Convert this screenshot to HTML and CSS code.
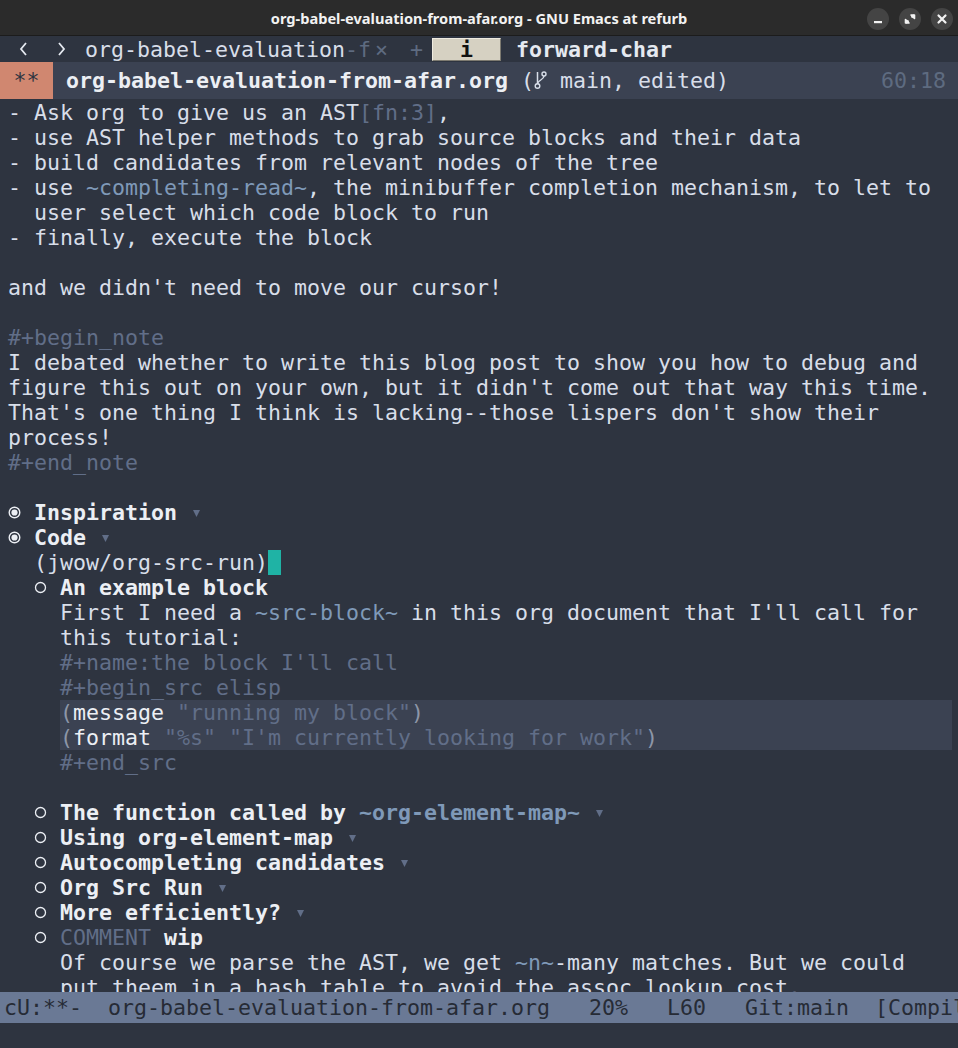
FILE: index.html
```html
<!DOCTYPE html>
<html>
<head>
<meta charset="utf-8">
<link rel="stylesheet" href="styles.css">
</head>
<body>
<div class="frame">
  <header class="titlebar">
    <div></div>
    <div class="title">org-babel-evaluation-from-afar.org - GNU Emacs at refurb</div>
    <div class="wbtns">
      <span class="wbtn"><svg width="22" height="22" viewBox="0 0 22 22"><rect x="7" y="13" width="8" height="2.2" fill="#f2f2f2"/></svg></span>
      <span class="wbtn"><svg width="22" height="22" viewBox="0 0 22 22"><path d="M12 7h3.5v3.5z M10 15H6.5v-3.5z" fill="#f2f2f2" stroke="#f2f2f2" stroke-width="1.6" stroke-linejoin="round"/><path d="M15 7l-2.5 2.5 M7 15l2.5-2.5" stroke="#f2f2f2" stroke-width="1.8"/></svg></span>
      <span class="wbtn"><svg width="22" height="22" viewBox="0 0 22 22"><path d="M7.5 7.5l7 7M14.5 7.5l-7 7" stroke="#f2f2f2" stroke-width="2.2" stroke-linecap="round"/></svg></span>
    </div>
  </header>

  <nav class="tabbar">
    <svg class="chev first" width="13" height="26" viewBox="0 0 13 26"><path d="M9 7l-5 6 5 6" fill="none" stroke="#e5e9f0" stroke-width="1.8"/></svg>
    <svg class="chev second" width="13" height="26" viewBox="0 0 13 26"><path d="M4 7l5 6-5 6" fill="none" stroke="#e5e9f0" stroke-width="1.8"/></svg>
    <span class="tabname">org-babel-evaluation<span class="dim">-f</span></span>
    <span class="close">×</span>
    <span class="plus">+</span>
    <span class="ibtn">i</span>
    <span class="cmd">forward-char</span>
  </nav>

  <div class="headerline">
    <span class="mod">**</span>
    <span class="fname">org-babel-evaluation-from-afar.org</span>
    <span class="vc"> (<svg class="git" width="13" height="22" viewBox="0 0 13 22"><path d="M3.5 3v12" stroke="#d8dee9" stroke-width="1.5" fill="none"/><circle cx="3.5" cy="17" r="2.3" stroke="#d8dee9" stroke-width="1.4" fill="none"/><circle cx="10" cy="5" r="2" stroke="#d8dee9" stroke-width="1.4" fill="none"/><path d="M10 7c0 4-6.5 4-6.5 8" stroke="#d8dee9" stroke-width="1.4" fill="none"/></svg> main, edited)</span>
    <span class="pos">60:18</span>
  </div>

  <main class="buffer">
    <div class="ln">- Ask org to give us an AST<span class="meta">[fn:3]</span>,</div>
    <div class="ln">- use AST helper methods to grab source blocks and their data</div>
    <div class="ln">- build candidates from relevant nodes of the tree</div>
    <div class="ln">- use <span class="code">~completing-read~</span>, the minibuffer completion mechanism, to let to</div>
    <div class="ln">  user select which code block to run</div>
    <div class="ln">- finally, execute the block</div>
    <div class="ln"> </div>
    <div class="ln">and we didn't need to move our cursor!</div>
    <div class="ln"> </div>
    <div class="ln meta">#+begin_note</div>
    <div class="ln">I debated whether to write this blog post to show you how to debug and</div>
    <div class="ln">figure this out on your own, but it didn't come out that way this time.</div>
    <div class="ln">That's one thing I think is lacking--those lispers don't show their</div>
    <div class="ln">process!</div>
    <div class="ln meta">#+end_note</div>
    <div class="ln"> </div>
    <div class="ln h1"><svg class="glyph" width="13" height="25" viewBox="0 0 13 25"><circle cx="6.5" cy="12.5" r="5.3" fill="none" stroke="#eceff4" stroke-width="1.4"/><circle cx="6.5" cy="12.5" r="3.1" fill="#eceff4"/></svg> <b>Inspiration</b> <svg class="glyph" width="13" height="25" viewBox="0 0 13 25"><path d="M3 10h7l-3.5 7z" fill="#616e88"/></svg></div>
    <div class="ln h1"><svg class="glyph" width="13" height="25" viewBox="0 0 13 25"><circle cx="6.5" cy="12.5" r="5.3" fill="none" stroke="#eceff4" stroke-width="1.4"/><circle cx="6.5" cy="12.5" r="3.1" fill="#eceff4"/></svg> <b>Code</b> <svg class="glyph" width="13" height="25" viewBox="0 0 13 25"><path d="M3 10h7l-3.5 7z" fill="#616e88"/></svg></div>
    <div class="ln">  (jwow/org-src-run)<span class="cursor"> </span></div>
    <div class="ln">  <svg class="glyph" width="13" height="25" viewBox="0 0 13 25"><circle cx="6.5" cy="12.5" r="5" fill="none" stroke="#eceff4" stroke-width="1.3"/></svg> <b>An example block</b></div>
    <div class="ln">    First I need a <span class="code">~src-block~</span> in this org document that I'll call for</div>
    <div class="ln">    this tutorial:</div>
    <div class="ln meta">    #+name:the block I'll call</div>
    <div class="ln meta">    #+begin_src elisp</div>
    <div class="ln src"><span class="paren">(</span><span class="fn">message</span> <span class="str">"running my block"</span><span class="paren">)</span></div>
    <div class="ln src"><span class="paren">(</span><span class="fn">format</span> <span class="str">"%s" "I'm currently looking for work"</span><span class="paren">)</span></div>
    <div class="ln meta">    #+end_src</div>
    <div class="ln"> </div>
    <div class="ln">  <svg class="glyph" width="13" height="25" viewBox="0 0 13 25"><circle cx="6.5" cy="12.5" r="5" fill="none" stroke="#eceff4" stroke-width="1.3"/></svg> <b>The function called by <span class="code">~org-element-map~</span></b> <svg class="glyph" width="13" height="25" viewBox="0 0 13 25"><path d="M3 10h7l-3.5 7z" fill="#616e88"/></svg></div>
    <div class="ln">  <svg class="glyph" width="13" height="25" viewBox="0 0 13 25"><circle cx="6.5" cy="12.5" r="5" fill="none" stroke="#eceff4" stroke-width="1.3"/></svg> <b>Using org-element-map</b> <svg class="glyph" width="13" height="25" viewBox="0 0 13 25"><path d="M3 10h7l-3.5 7z" fill="#616e88"/></svg></div>
    <div class="ln">  <svg class="glyph" width="13" height="25" viewBox="0 0 13 25"><circle cx="6.5" cy="12.5" r="5" fill="none" stroke="#eceff4" stroke-width="1.3"/></svg> <b>Autocompleting candidates</b> <svg class="glyph" width="13" height="25" viewBox="0 0 13 25"><path d="M3 10h7l-3.5 7z" fill="#616e88"/></svg></div>
    <div class="ln">  <svg class="glyph" width="13" height="25" viewBox="0 0 13 25"><circle cx="6.5" cy="12.5" r="5" fill="none" stroke="#eceff4" stroke-width="1.3"/></svg> <b>Org Src Run</b> <svg class="glyph" width="13" height="25" viewBox="0 0 13 25"><path d="M3 10h7l-3.5 7z" fill="#616e88"/></svg></div>
    <div class="ln">  <svg class="glyph" width="13" height="25" viewBox="0 0 13 25"><circle cx="6.5" cy="12.5" r="5" fill="none" stroke="#eceff4" stroke-width="1.3"/></svg> <b>More efficiently?</b> <svg class="glyph" width="13" height="25" viewBox="0 0 13 25"><path d="M3 10h7l-3.5 7z" fill="#616e88"/></svg></div>
    <div class="ln">  <svg class="glyph" width="13" height="25" viewBox="0 0 13 25"><circle cx="6.5" cy="12.5" r="5" fill="none" stroke="#eceff4" stroke-width="1.3"/></svg> <span class="meta">COMMENT</span> <b>wip</b></div>
    <div class="ln">    Of course we parse the AST, we get <span class="code">~n~</span>-many matches. But we could</div>
    <div class="ln">    put theem in a hash table to avoid the assoc lookup cost.</div>
  </main>

  <footer class="modeline">cU:**-  org-babel-evaluation-from-afar.org   20%   L60   Git:main  [Compilation]</footer>
  <div class="minibuffer"></div>
</div>
</body>
</html>
```
FILE: styles.css
```css
* { box-sizing: border-box; }
html, body { margin: 0; padding: 0; }
body {
  width: 958px;
  height: 1048px;
  overflow: hidden;
  background: #2e3440;
  font-family: "DejaVu Sans Mono", monospace;
  font-size: 21.6px;
  color: #d8dee9;
}
.frame {
  display: flex;
  flex-direction: column;
  height: 1048px;
}
.titlebar {
  height: 36px;
  flex: none;
  background: #2b2b2b;
  border-bottom: 1px solid #1c1c1c;
  display: grid;
  grid-template-columns: 1fr auto 1fr;
  align-items: center;
}
.title {
  font-family: "Noto Sans", sans-serif;
  font-weight: 700;
  font-size: 14.6px;
  color: #f2f2f2;
}
.wbtns {
  display: flex;
  justify-content: flex-end;
  gap: 10px;
  padding-right: 5px;
  padding-top: 2px;
}
.wbtn {
  width: 22px;
  height: 22px;
  border-radius: 50%;
  background: #444444;
  display: block;
}
.wbtn svg { display: block; }

.tabbar {
  height: 26px;
  flex: none;
  display: flex;
  align-items: center;
  white-space: pre;
  color: #d8dee9;
  background: #2e3440;
}
.chev { display: block; flex: none; }
.chev.first { margin-left: 17px; }
.chev.second { margin-left: 25px; }
.tabname { margin-left: 17px; }
.dim { color: #5e6b80; }
.close { margin-left: 4px; color: #5e6b80; }
.plus { margin-left: 22px; color: #5e6b80; }
.ibtn {
  margin-left: 9px;
  width: 69px;
  height: 23px;
  background: #d6d1c2;
  border: 1px solid;
  border-color: #efebe0 #7d7a70 #7d7a70 #efebe0;
  color: #111;
  font-weight: 700;
  line-height: 21px;
  text-align: center;
}
.cmd { margin-left: 15px; font-weight: 700; color: #e5e9f0; }

.headerline {
  height: 37px;
  flex: none;
  display: flex;
  align-items: center;
  background: #3b4252;
  white-space: pre;
}
.mod {
  width: 53px;
  align-self: stretch;
  background: #d08770;
  color: #2e3440;
  display: flex;
  align-items: center;
  justify-content: center;
}
.fname { margin-left: 13px; font-weight: 700; color: #eceff4; }
.git { vertical-align: -3px; }
.pos { margin-left: auto; padding-right: 12px; color: #5e6b80; }

.buffer {
  flex: 1;
  overflow: hidden;
  padding: 1px 6px 0 8px;
  display: flex;
  flex-direction: column;
}
.ln {
  height: 25px;
  line-height: 25px;
  white-space: pre;
  flex: none;
}
.glyph { vertical-align: top; }
b { font-weight: 700; color: #eceff4; }
.meta { color: #616e88; }
.code { color: #7f99b8; }
.cursor { background: #1fb3a5; }
.src { margin-left: 52px; background: #3b4252; }
.paren { color: #8d96a8; }
.fn { color: #eceff4; }
.str { color: #616e88; }

.modeline {
  height: 31px;
  flex: none;
  background: #6a7995;
  color: #262b35;
  white-space: pre;
  overflow: hidden;
  padding-left: 4px;
  line-height: 31px;
}
.minibuffer {
  height: 25px;
  flex: none;
  background: #2e3440;
}
```
